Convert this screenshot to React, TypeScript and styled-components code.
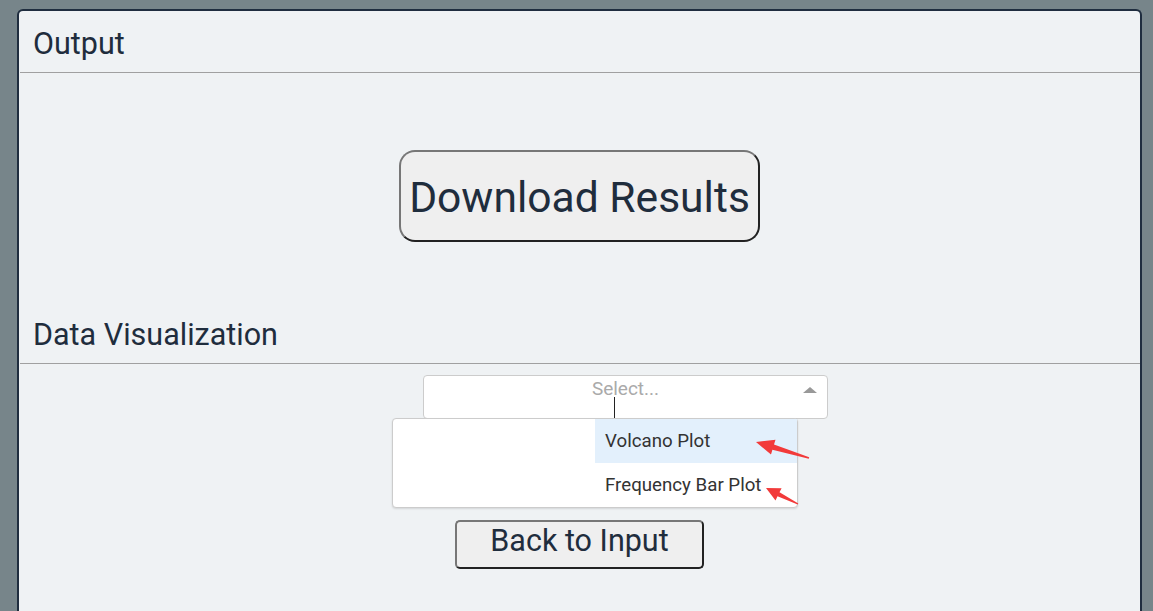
import React from "react";
import styled, { createGlobalStyle } from "styled-components";

const Global = createGlobalStyle`
  html, body { margin: 0; padding: 0; }
  body {
    background: #77858a;
    font-family: Roboto, "Noto Sans", Arial, sans-serif;
    color: #1f2d3d;
    overflow: hidden;
  }
`;

const Page = styled.div`
  padding: 9px 11px 0 17px;
  height: 611px;
  box-sizing: border-box;
`;

const Card = styled.div`
  background: #eff2f4;
  border: 2px solid #1f2d3f;
  border-bottom: none;
  border-radius: 6px 6px 0 0;
  height: 640px;
  display: flex;
  flex-direction: column;
`;

const SectionTitle = styled.h2`
  margin: 0 0 0 1px;
  padding: 13px 0 0 13px;
  height: 48px;
  font-size: 30.5px;
  font-weight: 400;
  line-height: 40px;
  border-bottom: 1px solid #a0a0a0;
`;

const ButtonRow = styled.div`
  display: flex;
  justify-content: center;
  padding-top: 77px;
  height: 229px;
  box-sizing: border-box;
`;

const BigButton = styled.button`
  width: 361px;
  height: 92px;
  border-radius: 16px;
  border: 2px solid;
  border-color: #777 #222 #222 #777;
  background: #efefef;
  font-family: Roboto, Arial, sans-serif;
  font-size: 42.6px;
  color: #1f2d3d;
  padding: 2px 0 0;
`;

const VizArea = styled.div`
  display: flex;
  flex-direction: column;
  align-items: center;
  padding-top: 11px;
`;

const SelectBox = styled.div`
  position: relative;
  width: 405px;
  height: 44px;
  margin-left: 92px;
  background: #fff;
  border: 1px solid #ccc;
  border-radius: 4px;
  box-sizing: border-box;
  display: flex;
  justify-content: center;
`;

const Placeholder = styled.span`
  font-size: 19px;
  color: #aaa;
  line-height: 22px;
  padding-top: 2px;
`;

const Caret = styled.span`
  position: absolute;
  left: 190px;
  top: 21px;
  width: 1px;
  height: 22px;
  background: #222;
`;

const Arrow = styled.span`
  position: absolute;
  right: 10px;
  top: 11px;
  width: 0;
  height: 0;
  border-left: 7px solid transparent;
  border-right: 7px solid transparent;
  border-bottom: 6px solid #999;
`;

const Menu = styled.div`
  position: absolute;
  left: -32px;
  top: 42px;
  width: 406px;
  height: 90px;
  background: #fff;
  border: 1px solid #ccc;
  border-radius: 4px;
  box-shadow: 0 1px 2px rgba(0, 0, 0, 0.12);
  box-sizing: border-box;
  display: flex;
  flex-direction: column;
  align-items: flex-end;
  z-index: 2;
`;

const Option = styled.div<{ $active?: boolean }>`
  width: 202px;
  height: 44px;
  box-sizing: border-box;
  padding-left: 10px;
  display: flex;
  align-items: center;
  font-size: 18.7px;
  color: #333;
  background: ${(p) => (p.$active ? "#e3f0fc" : "transparent")};
`;

const Annotations = styled.svg`
  position: absolute;
  left: 330px;
  top: 60px;
  overflow: visible;
  z-index: 3;
`;

const BackButton = styled.button`
  margin-top: 101px;
  width: 249px;
  height: 49px;
  border-radius: 5px;
  border: 2px solid;
  border-color: #777 #222 #222 #777;
  background: #efefef;
  font-family: Roboto, Arial, sans-serif;
  font-size: 30.5px;
  color: #1f2d3d;
  padding: 0 0 7px;
  line-height: 36px;
`;

export default function App() {
  return (
    <>
      <Global />
      <Page>
        <Card>
          <SectionTitle>Output</SectionTitle>
          <ButtonRow>
            <BigButton>Download Results</BigButton>
          </ButtonRow>
          <SectionTitle>Data Visualization</SectionTitle>
          <VizArea>
            <SelectBox>
              <Placeholder>Select...</Placeholder>
              <Caret />
              <Arrow />
              <Menu>
                <Option $active>Volcano Plot</Option>
                <Option>Frequency Bar Plot</Option>
              </Menu>
              <Annotations width="60" height="70">
                <polygon
                  points="2,6 21.5,3.8 20,8.6 55.2,21.3 54.8,22.7 18.4,13.8 17,18.6"
                  fill="#f23a3a"
                />
                <polygon
                  points="12,52 27.6,52.2 25.5,56.3 44.3,67.5 43.7,68.5 23.5,60.3 21.5,64.4"
                  fill="#f23a3a"
                />
              </Annotations>
            </SelectBox>
            <BackButton>Back to Input</BackButton>
          </VizArea>
        </Card>
      </Page>
    </>
  );
}
